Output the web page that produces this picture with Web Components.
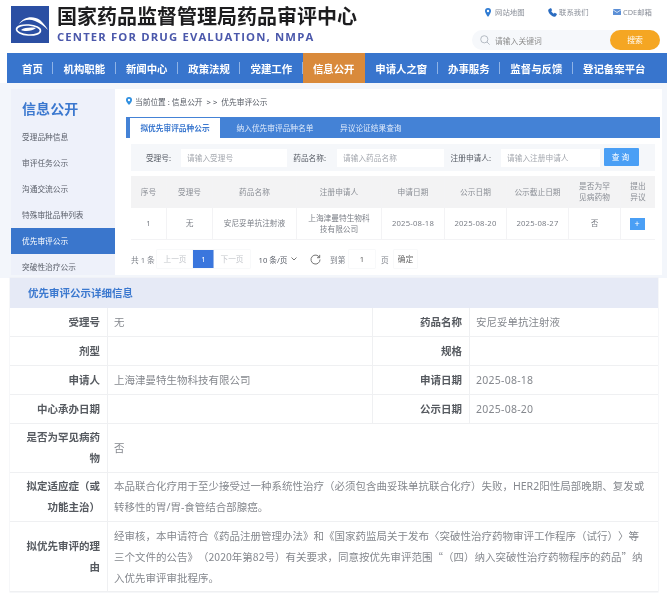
<!DOCTYPE html>
<html lang="zh">
<head>
<meta charset="utf-8">
<title>优先审评公示</title>
<style>
  html, body { margin: 0; padding: 0; background: #fff; }
  body {
    width: 667px; height: 597px; overflow: hidden;
    font-family: "Noto Sans", "Noto Sans CJK SC", sans-serif;
    text-spacing-trim: space-all;
    filter: blur(.3px);
  }
</style>
</head>
<body>
<cde-header></cde-header>
<cde-nav>
  <cde-nav-item>首页</cde-nav-item>
  <cde-nav-item>机构职能</cde-nav-item>
  <cde-nav-item>新闻中心</cde-nav-item>
  <cde-nav-item>政策法规</cde-nav-item>
  <cde-nav-item>党建工作</cde-nav-item>
  <cde-nav-item active>信息公开</cde-nav-item>
  <cde-nav-item>申请人之窗</cde-nav-item>
  <cde-nav-item>办事服务</cde-nav-item>
  <cde-nav-item>监督与反馈</cde-nav-item>
  <cde-nav-item last>登记备案平台</cde-nav-item>
</cde-nav>
<cde-content>
  <cde-sidebar slot="side" heading="信息公开">
    <cde-side-item>受理品种信息</cde-side-item>
    <cde-side-item>审评任务公示</cde-side-item>
    <cde-side-item>沟通交流公示</cde-side-item>
    <cde-side-item>特殊审批品种列表</cde-side-item>
    <cde-side-item active>优先审评公示</cde-side-item>
    <cde-side-item>突破性治疗公示</cde-side-item>
  </cde-sidebar>
  <cde-review-panel slot="main"></cde-review-panel>
</cde-content>
<cde-detail heading="优先审评公示详细信息">
  <cde-row label="受理号" value="无" label2="药品名称" value2="安尼妥单抗注射液"></cde-row>
  <cde-row label="剂型" label2="规格"></cde-row>
  <cde-row label="申请人" value="上海津曼特生物科技有限公司" label2="申请日期" value2="2025-08-18"></cde-row>
  <cde-row label="中心承办日期" label2="公示日期" value2="2025-08-20"></cde-row>
  <cde-row wide h="49" label="是否为罕见病药物" value="否"></cde-row>
  <cde-row wide h="49" label="拟定适应症（或功能主治）" value="本品联合化疗用于至少接受过一种系统性治疗（必须包含曲妥珠单抗联合化疗）失败，HER2阳性局部晚期、复发或转移性的胃/胃-食管结合部腺癌。"></cde-row>
  <cde-row wide cjk h="70" label="拟优先审评的理由" value="经审核，本申请符合《药品注册管理办法》和《国家药监局关于发布〈突破性治疗药物审评工作程序（试行）〉等三个文件的公告》（2020年第82号）有关要求，同意按优先审评范围“（四）纳入突破性治疗药物程序的药品”纳入优先审评审批程序。"></cde-row>
</cde-detail>

<script>
// helper so every element gets an open shadow root with its own style
function shadow(el, html) {
  el.attachShadow({ mode: 'open' }).innerHTML = html;
}

class CdeHeader extends HTMLElement {
  connectedCallback() {
    shadow(this, `
      <style>
        :host { display: flex; justify-content: space-between; height: 53px; box-sizing: border-box; }
        .brand { display: flex; padding: 6px 0 0 11px; gap: 8px; }
        .logo { width: 38px; height: 37px; display: block; }
        h1 { margin: 0; font-size: 20px; line-height: 21px; font-weight: 700; color: #1d1d1f; white-space: nowrap; }
        .en { margin-top: 4px; font: 700 11.3px/12px "Open Sans", sans-serif; letter-spacing: 1.15px; color: #4b58ab; white-space: nowrap; }
        .tools { width: 195px; padding-top: 6px; box-sizing: border-box; }
        .links { display: flex; font-size: 7.4px; line-height: 12px; color: #8a8f99; padding-left: 13px; }
        .links span { display: flex; align-items: center; gap: 2px; }
        .links span:nth-child(1) { width: 63px; gap: 4px; }
        .links span:nth-child(2) { width: 65px; }
        .search { margin: 12px 7px 0 0; height: 20px; display: flex; align-items: center; border-radius: 10px; background: #f6f8fb; }
        .search svg { margin-left: 8px; }
        .search .hint { flex: 1; margin-left: 5px; font-size: 7.8px; color: #8d8d8d; }
        .search b { width: 50px; height: 20px; border-radius: 10px; background: #f5a623; color: #fff; font-size: 7.8px; font-weight: 400; text-align: center; line-height: 20px; }
      </style>
      <div class="brand">
        <svg class="logo" viewBox="0 0 38 37">
          <rect width="38" height="37" fill="#2b4fa3"/>
          <path d="M8 18C12 11 22 9 29 14C32 17 35 20 37 24C33 20 29 17 24 15C18 12.5 12 14 8 18Z" fill="#fff"/>
          <ellipse cx="17.500" cy="24" rx="12" ry="5" transform="rotate(4 17.500 24)" fill="none" stroke="#fff" stroke-width="1.600"/>
          <path d="M10 24C13 21.500 21 21 25 22C22 25 14 26 10 24Z" fill="#fff"/>
        </svg>
        <div>
          <h1>国家药品监督管理局药品审评中心</h1>
          <div class="en">CENTER FOR DRUG EVALUATION, NMPA</div>
        </div>
      </div>
      <div class="tools">
        <div class="links">
          <span><svg width="6" height="9" viewBox="0 0 6 9"><path d="M3 0a3 3 0 0 1 3 3c0 2-3 6-3 6S0 5 0 3a3 3 0 0 1 3-3z" fill="#2f7bd3"/><circle cx="3" cy="3" r="1.200" fill="#fff"/></svg>网站地图</span>
          <span><svg width="9" height="9" viewBox="0 0 9 9"><path d="M1 1l2-1 1.200 2.200-1 .9c.5 1.200 1.400 2 2.600 2.600l.9-1L9 6 8 8c-.4.6-1 1-1.800.8C3.500 8.300.7 5.500.2 2.800.1 2 .4 1.400 1 1z" fill="#2b6cc0"/></svg>联系我们</span>
          <span><svg width="8" height="6" viewBox="0 0 8 6"><rect width="8" height="6" rx=".6" fill="#5b8fd6"/><path d="M0 .8l4 2.700L8 .8" fill="none" stroke="#fff" stroke-width=".7"/></svg>CDE邮箱</span>
        </div>
        <div class="search">
          <svg width="10" height="10" viewBox="0 0 10 10" fill="none" stroke="#aeb4bd" stroke-width=".9"><circle cx="4.300" cy="4.300" r="3.600"/><path d="M7 7l2.600 2.600"/></svg>
          <span class="hint">请输入关键词</span>
          <b>搜索</b>
        </div>
      </div>`);
  }
}

class CdeNav extends HTMLElement {
  connectedCallback() {
    shadow(this, `
      <style>
        :host { display: flex; height: 30px; margin-left: 7px; background: #3875cd; }
      </style>
      <slot></slot>`);
  }
}

class CdeNavItem extends HTMLElement {
  connectedCallback() {
    shadow(this, `
      <style>
        :host { display: flex; align-items: center; padding: 0 10.400px; height: 30px; position: relative; font-size: 10.400px; font-weight: 700; color: #fff; white-space: nowrap; }
        :host([active]) { background: #d98a3b; }
        :host(:first-child) { padding-left: 15px; }
        .sep { width: 1px; height: 12px; background: #8fb3e6; position: absolute; right: 0; top: 9px; }
        :host([active]) .sep, :host([last]) .sep { display: none; }
      </style>
      <slot></slot><i class="sep"></i>`);
  }
}

class CdeContent extends HTMLElement {
  connectedCallback() {
    shadow(this, `
      <style>
        :host { display: block; background: #f3f6fb; padding: 6px 5px 3px 11px; }
        .wrap { display: flex; height: 186px; background: #fff; overflow: hidden; }
      </style>
      <div class="wrap"><slot name="side"></slot><slot name="main"></slot></div>`);
  }
}

class CdeSidebar extends HTMLElement {
  connectedCallback() {
    shadow(this, `
      <style>
        :host { display: block; width: 104px; background: #eef1fa; flex: none; overflow: hidden; }
        h2 { margin: 0; padding: 12px 0 0 11px; height: 35px; box-sizing: border-box; font-size: 14px; line-height: 16px; font-weight: 700; color: #3b78cf; letter-spacing: .1px; }
      </style>
      <h2>${this.getAttribute('heading')}</h2>
      <slot></slot>`);
  }
}

class CdeSideItem extends HTMLElement {
  connectedCallback() {
    shadow(this, `
      <style>
        :host { display: block; height: 26px; line-height: 26px; padding-left: 11px; font-size: 7.700px; color: #5a5f69; white-space: nowrap; }
        :host([active]) { background: #3a76cc; color: #fff; }
      </style>
      <slot></slot>`);
  }
}

class CdeReviewPanel extends HTMLElement {
  connectedCallback() {
    const cols = [35, 46, 84, 85, 63, 62, 62, 52, 35];
    const cell = t => /^\d{4}-/.test(t) ? `<span class="date">${t}</span>` : t;
    shadow(this, `
      <style>
        :host { display: block; flex: 1; min-width: 0; font-size: 7.700px; color: #7f838b; }
        .crumb { padding-left: 11px; display: flex; gap: 3px; align-items: center; height: 24px; margin-bottom: 4px; color: #555a63; }
        .box { margin: 0 2px 0 11px; }
        .tabs { display: flex; height: 21px; background: #4482d6; align-items: flex-end; padding-left: 4px; color: #dfeafa; }
        .tabs span { height: 20px; line-height: 20px; text-align: center; }
        .tabs .on { width: 90px; background: #fff; color: #3b78cf; font-weight: 700; }
        .tabs .t2 { width: 110px; }
        .tabs .t3 { width: 76px; margin-left: 7px; text-align: left; padding-left: 3px; }
        .filters { margin: 6px 5px 5px; height: 27px; background: #f5f7fa; display: flex; align-items: center; color: #555a63; white-space: nowrap; }
        .filters label { text-align: right; box-sizing: border-box; }
        .filters .in { height: 18px; line-height: 18px; background: #fff; padding-left: 6px; box-sizing: border-box; color: #a4a8af; }
        .filters button { margin-left: 4px; width: 35px; height: 18px; border: 0; background: #4a9ff5; color: #fff; font: inherit; letter-spacing: 2px; padding: 0; border-radius: 1px; position: relative; top: -1px; }
        .grid { margin: 0 5px; display: grid; grid-template-columns: ${cols.map(c => c + 'px').join(' ')}; grid-template-rows: 32px 32px; }
        .grid div { display: flex; align-items: center; justify-content: center; text-align: center; line-height: 11px; padding: 0 8px; box-sizing: border-box; }
        .grid .th { background: #f3f3f4; color: #8a8e95; }
        .grid .th:nth-child(7) { padding: 0; }
        .grid .td { border-bottom: 1px solid #f3f3f5; color: #7b7f87; }
        .grid .th + .th, .grid .td + .td { border-left: 1px solid #f3f3f5; }
        .date { letter-spacing: .2px; white-space: nowrap; }
        .plus { width: 15px; height: 12px; background: #4a9ff5; color: #fff; line-height: 12px; font-size: 9px; text-align: center; position: relative; left: -1px; }
        .pager { margin: 10px 5px 0; display: flex; align-items: center; height: 18px; white-space: nowrap; }
        .pager .btn { height: 18px; line-height: 18px; text-align: center; box-sizing: border-box; color: #c4c7cc; background: #fff; box-shadow: 0 0 0 .5px #f2f3f5; }
        .pager .cur { width: 21px; background: #3a76dd; color: #fff; }
      </style>
      <div class="crumb">
        <svg width="6" height="8" viewBox="0 0 6 8"><path d="M3 0a3 3 0 0 1 3 3c0 2-3 5-3 5S0 5 0 3a3 3 0 0 1 3-3z" fill="#2f8fe0"/><circle cx="3" cy="3" r="1.200" fill="#fff"/></svg>
        <span>当前位置 : 信息公开 &nbsp;&gt; &gt;&nbsp; 优先审评公示</span>
      </div>
      <div class="box">
        <div class="tabs">
          <span class="on">拟优先审评品种公示</span>
          <span class="t2">纳入优先审评品种名单</span>
          <span class="t3">异议论证结果查询</span>
        </div>
        <div class="filters">
          <label style="width:40px">受理号:</label>
          <span class="in" style="width:106px;margin-left:10px">请输入受理号</span>
          <label style="width:39px">药品名称:</label>
          <span class="in" style="width:107px;margin-left:11px">请输入药品名称</span>
          <label style="width:47px">注册申请人:</label>
          <span class="in" style="width:99px;margin-left:10px">请输入注册申请人</span>
          <button>查询</button>
        </div>
        <div class="grid">
          ${['序号','受理号','药品名称','注册申请人','申请日期','公示日期','公示截止日期','是否为罕见病药物','提出异议'].map(t => `<div class="th">${t}</div>`).join('')}
          ${['1','无','安尼妥单抗注射液','上海津曼特生物科技有限公司','2025-08-18','2025-08-20','2025-08-27','否'].map(t => `<div class="td">${cell(t)}</div>`).join('')}
          <div class="td"><span class="plus">+</span></div>
        </div>
        <div class="pager">
          <span style="width:26px">共 1 条</span>
          <span class="btn" style="width:36px">上一页</span>
          <span class="btn cur">1</span>
          <span class="btn" style="width:36px">下一页</span>
          <span style="width:43px;margin-left:6px;display:flex;justify-content:center;gap:3px;align-items:center;color:#5a5f69">10 条/页
            <svg width="6" height="4" viewBox="0 0 6 4" fill="none" stroke="#555" stroke-width=".8"><path d="M.5 .5L3 3l2.500-2.500"/></svg></span>
          <svg style="margin-left:11px" width="11" height="11" viewBox="0 0 11 11" fill="none" stroke="#666" stroke-width=".9"><path d="M9.500 3.500A4.500 4.500 0 1 0 10 5.500M9.700 .9v2.800H7"/></svg>
          <span style="margin-left:9px;width:19px">到第</span>
          <span class="btn" style="width:26px;color:#666">1</span>
          <span style="margin-left:6px;width:13px">页</span>
          <span class="btn" style="width:23px;color:#666">确定</span>
        </div>
      </div>`);
  }
}

class CdeDetail extends HTMLElement {
  connectedCallback() {
    shadow(this, `
      <style>
        :host { display: block; margin: 0 9px 0 10px; box-shadow: 0 0 0 .5px #eceef2; }
        h3 { margin: 0; height: 30px; line-height: 30px; padding-left: 18px; background: #e6eaf6; font-size: 10.500px; font-weight: 700; color: #3b78cf; }
      </style>
      <h3>${this.getAttribute('heading')}</h3>
      <slot></slot>`);
  }
}

class CdeRow extends HTMLElement {
  connectedCallback() {
    const a = n => this.getAttribute(n) || '';
    const wide = this.hasAttribute('wide');
    const rowH = a('h') || 29;
    const cls = s => /^\d{4}-/.test(s) ? 'date' : '';
    shadow(this, `
      <style>
        :host { display: grid; grid-template-columns: 97px ${wide ? '1fr' : '265px 97px 1fr'}; height: ${rowH}px; box-sizing: border-box; border-bottom: 1px solid #eff0f2; font-size: 10.500px; line-height: 21px; }
        div { padding: 0 7px; box-sizing: border-box; display: flex; align-items: center; }
        .k { justify-content: flex-end; text-align: right; font-weight: 700; color: #565a60; }
        .v { color: #85888e; border-left: 1px solid #eff0f2; padding: 0 6px; }
        .v > span { max-width: 534px; }
        /* curly quotes only get their full width from the CJK face */
        :host([cjk]) .v { font-family: "Noto Sans CJK SC", sans-serif; }
        .date { letter-spacing: .25px; }
      </style>
      <div class="k"><span>${a('label')}</span></div>
      <div class="v"><span class="${cls(a('value'))}">${a('value')}</span></div>
      ${wide ? '' : `<div class="k" style="border-left:1px solid #eff0f2"><span>${a('label2')}</span></div><div class="v"><span class="${cls(a('value2'))}">${a('value2')}</span></div>`}`);
  }
}

customElements.define('cde-header', CdeHeader);
customElements.define('cde-nav', CdeNav);
customElements.define('cde-nav-item', CdeNavItem);
customElements.define('cde-content', CdeContent);
customElements.define('cde-sidebar', CdeSidebar);
customElements.define('cde-side-item', CdeSideItem);
customElements.define('cde-review-panel', CdeReviewPanel);
customElements.define('cde-detail', CdeDetail);
customElements.define('cde-row', CdeRow);
</script>
</body>
</html>
